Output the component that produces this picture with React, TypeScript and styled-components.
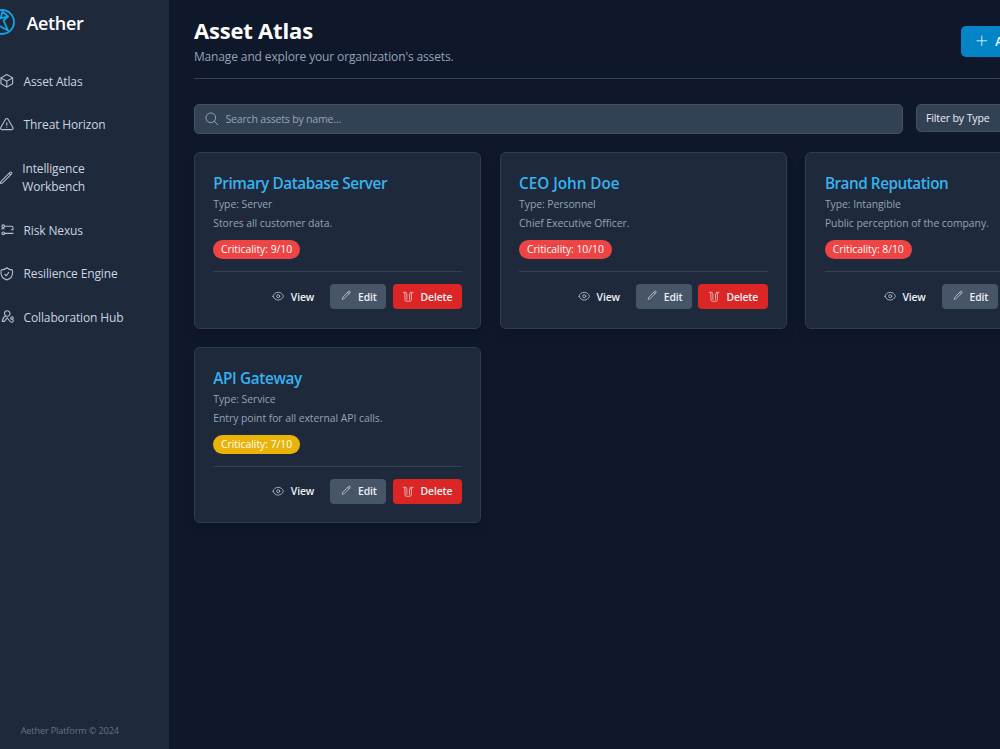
import React from "react";
import styled, { createGlobalStyle, css } from "styled-components";

const Global = createGlobalStyle`
  *, *::before, *::after { box-sizing: border-box; }
  html, body { margin: 0; height: 100%; overflow: hidden; background: #0f172a; }
  body { font-family: "Segoe UI", "Open Sans", "Noto Sans", sans-serif; color: #e2e8f0; }
  h1, h2, p { margin: 0; }
  button { font-family: inherit; border: 0; margin: 0; }
`;

const Shell = styled.div`
  display: flex;
  width: 1149px;
  height: 749px;
  margin-left: -31px;
`;

const Sidebar = styled.aside`
  display: flex;
  flex-direction: column;
  flex: none;
  width: 200px;
  padding: 8.7px 18.7px 12px;
  background: #1e293b;
`;

const Brand = styled.div`
  display: flex;
  align-items: center;
  gap: 11.7px;
  height: 28px;
  color: #fff;
  font-size: 18px;
  font-weight: 600;
  letter-spacing: -0.3px;
  svg { flex: none; color: #0ea5e9; }
`;

const Nav = styled.nav`
  display: flex;
  flex-direction: column;
  gap: 6.2px;
  margin-top: 25.8px;
`;

const NavItem = styled.a`
  display: flex;
  align-items: center;
  gap: 9.3px;
  padding: 9.3px 11px;
  color: #cbd5e1;
  font-size: 12px;
  letter-spacing: -0.14px;
  line-height: 18.65px;
  svg { flex: 0 1 15.6px; min-width: 0; color: #b4c0d0; }
`;

const NavLabel = styled.span`
  padding-top: 1px;
  margin-bottom: -1px;
`;

const SideFooter = styled.p`
  margin-top: auto;
  padding-left: 33px;
  color: #64748b;
  font-size: 9.2px;
  letter-spacing: -0.16px;
  line-height: 13px;
`;

const Main = styled.main`
  flex: 1;
  min-width: 0;
  padding: 16px 24.9px;
`;

const Header = styled.header`
  display: flex;
  justify-content: space-between;
  align-items: flex-start;
  height: 63px;
  border-bottom: 1px solid #334155;
`;

const Title = styled.h1`
  color: #fff;
  font-size: 22px;
  font-weight: 700;
  letter-spacing: -0.18px;
  line-height: 28px;
`;

const Subtitle = styled.p`
  margin-top: 2.5px;
  color: #94a3b8;
  font-size: 12px;
  letter-spacing: -0.13px;
  line-height: 19px;
`;

const AddButton = styled.button`
  display: flex;
  align-items: center;
  gap: 6.2px;
  width: 132px;
  height: 31px;
  margin-top: 9.6px;
  padding: 0 12.4px;
  border-radius: 5px;
  background: #0284c7;
  color: #fff;
  font-size: 12px;
  font-weight: 600;
  white-space: nowrap;
  svg { opacity: 0.85; }
`;

const Toolbar = styled.div`
  display: flex;
  align-items: flex-start;
  gap: 12.5px;
  margin: 24.5px 0 18.5px;
`;

const field = css`
  display: flex;
  align-items: center;
  border: 1px solid #435167;
  border-radius: 5px;
  background: #334155;
`;

const Search = styled.label`
  ${field}
  flex: none;
  width: 709.5px;
  height: 30.3px;
  gap: 6px;
  padding: 0 9px;
  color: #94a3b8;
  font-size: 10.6px;
  letter-spacing: -0.22px;
`;

const Filter = styled.div`
  ${field}
  flex: 1;
  height: 28.5px;
  padding: 0 9px;
  color: #e8edf4;
  font-size: 10.6px;
  letter-spacing: -0.14px;
`;

const Grid = styled.section`
  display: grid;
  grid-template-columns: repeat(3, 287.3px);
  gap: 18.5px;
`;

const Card = styled.article`
  height: 176.3px;
  padding: 18.8px 18.4px 17px;
  border: 1px solid #2f3d50;
  border-radius: 6px;
  background: #1e293b;
  box-shadow: 0 8px 12px -2px rgba(0, 0, 0, 0.12);
`;

const CardTitle = styled.h2<{ $tracking: number }>`
  color: #38b2f0;
  font-size: 15.3px;
  font-weight: 600;
  letter-spacing: ${(p) => p.$tracking}px;
  line-height: 22px;
`;

const Detail = styled.p`
  margin-top: 3.1px;
  color: #94a3b8;
  font-size: 10.4px;
  letter-spacing: -0.05px;
  line-height: 15.6px;
  &:first-of-type { margin-top: 3.1px; }
`;

const Badge = styled.span<{ $tone: string }>`
  display: block;
  width: fit-content;
  margin-top: 8.3px;
  padding: 0 7.8px;
  border-radius: 10px;
  background: ${(p) => p.$tone};
  color: #fff;
  font-size: 10.4px;
  letter-spacing: -0.04px;
  line-height: 19px;
`;

const Actions = styled.div`
  display: flex;
  justify-content: flex-end;
  gap: 6.5px;
  margin-top: 12.2px;
  padding-top: 12.2px;
  border-top: 1px solid #334155;
`;

const Action = styled.button<{ $bg?: string }>`
  display: flex;
  align-items: center;
  gap: 6.2px;
  height: 24.9px;
  padding: 0 9.4px;
  border-radius: 4px;
  background: ${(p) => p.$bg ?? "transparent"};
  color: #edf1f6;
  font-size: 10.4px;
  font-weight: 600;
  letter-spacing: -0.13px;
  svg { flex: none; opacity: 0.82; }
`;

const paths = {
  cube: "M21 7.5l-9-5.25L3 7.5m18 0l-9 5.25m9-5.25v9l-9 5.25M3 7.5l9 5.25M3 7.5v9l9 5.25m0-9v9",
  warning:
    "M12 9v3.75m-9.303 3.376c-.866 1.5.217 3.374 1.948 3.374h14.71c1.73 0 2.813-1.874 1.948-3.374L13.949 3.378c-.866-1.5-3.032-1.5-3.898 0L2.697 16.126zM12 15.75h.007v.008H12v-.008z",
  pencil:
    "M16.862 4.487l1.687-1.688a1.875 1.875 0 112.652 2.652L6.832 19.82a4.5 4.5 0 01-1.897 1.13l-2.685.8.8-2.685a4.5 4.5 0 011.13-1.897L16.863 4.487zm0 0L19.5 7.125",
  shortPencil:
    "M16.862 4.487l1.687-1.688a1.875 1.875 0 112.652 2.652L10.582 16.07a4.5 4.5 0 01-1.897 1.13L6 18l.8-2.685a4.5 4.5 0 011.13-1.897l8.932-8.931zm0 0L19.5 7.125",
  nexus:
    "M9 6.500h10.500a2 2 0 012 2V12M4.500 6.500a2 2 0 104 0 2 2 0 10-4 0M4 10.500h4M4.500 17.500a2 2 0 104 0 2 2 0 10-4 0M9 17.500h12.500M19 12h2.500",
  shield:
    "M9 12.75L11.25 15 15 9.75m-3-7.036A11.959 11.959 0 013.598 6 11.99 11.99 0 003 9.749c0 5.592 3.824 10.29 9 11.623 5.176-1.332 9-6.03 9-11.622 0-1.31-.21-2.571-.598-3.751h-.152c-3.196 0-6.1-1.248-8.25-3.285z",
  people:
    "M8.500 7a4.200 4.200 0 108.400 0 4.200 4.200 0 10-8.400 0M10.500 10.500C7.500 12 5.500 15.500 5 19h3.500L12.500 13.500l4 5M18 14a2 2 0 104 0 2 2 0 10-4 0M18 19a2 2 0 003.800 0v-2",
  plus: "M12 4.5v15m7.5-7.5h-15",
  search: "M21 21l-5.197-5.197m0 0A7.5 7.5 0 105.196 5.196a7.5 7.5 0 0010.607 10.607z",
  eye: "M2.036 12.322a1.012 1.012 0 010-.639C3.423 7.51 7.36 4.5 12 4.5c4.638 0 8.573 3.007 9.963 7.178.07.207.07.431 0 .639C20.577 16.49 16.64 19.5 12 19.5c-4.638 0-8.573-3.007-9.963-7.178zM15 12a3 3 0 11-6 0 3 3 0 016 0z",
  trash:
    "M14.600 8v10M9.400 8v10M5.200 5.500L6 19.700a2.250 2.250 0 002.250 2.050h7.500A2.250 2.250 0 0018 19.700L18.800 5.500M2.500 4.500h5.500v3M21.500 4.500h-5.500v3",
};

type IconName = keyof typeof paths;

const Icon = ({ name, size, weight = 1.5 }: { name: IconName; size: number; weight?: number }) => (
  <svg
    width={size}
    height={size}
    viewBox="0 0 24 24"
    fill="none"
    stroke="currentColor"
    strokeWidth={weight}
    strokeLinecap="round"
    strokeLinejoin="round"
  >
    <path d={paths[name]} />
  </svg>
);

const Logo = () => (
  <svg width="27" height="27" viewBox="0 0 27 27" fill="none" stroke="currentColor" strokeWidth="1.8">
    <circle cx="14" cy="13" r="12" />
    <path d="M14.5 2.5L20 7.500L15.500 11.500L20 21.500L7 14.500M14.500 2.500L12.500 9.500L19 7.500" strokeLinejoin="round" />
  </svg>
);

const navItems: { icon: IconName; label: string }[] = [
  { icon: "cube", label: "Asset Atlas" },
  { icon: "warning", label: "Threat Horizon" },
  { icon: "pencil", label: "Intelligence Workbench" },
  { icon: "nexus", label: "Risk Nexus" },
  { icon: "shield", label: "Resilience Engine" },
  { icon: "people", label: "Collaboration Hub" },
];

const assets = [
  { name: "Primary Database Server", type: "Server", text: "Stores all customer data.", score: 9, tracking: -0.42 },
  { name: "CEO John Doe", type: "Personnel", text: "Chief Executive Officer.", score: 10, tracking: -0.04 },
  { name: "Brand Reputation", type: "Intangible", text: "Public perception of the company.", score: 8, tracking: -0.47 },
  { name: "API Gateway", type: "Service", text: "Entry point for all external API calls.", score: 7, tracking: -0.35 },
];

export default function App() {
  return (
    <>
      <Global />
      <Shell>
        <Sidebar>
          <Brand>
            <Logo />
            Aether
          </Brand>
          <Nav>
            {navItems.map((item) => (
              <NavItem key={item.label}>
                <Icon name={item.icon} size={15.6} weight={1.7} />
                <NavLabel>{item.label}</NavLabel>
              </NavItem>
            ))}
          </Nav>
          <SideFooter>Aether Platform © 2024</SideFooter>
        </Sidebar>
        <Main>
          <Header>
            <div>
              <Title>Asset Atlas</Title>
              <Subtitle>Manage and explore your organization's assets.</Subtitle>
            </div>
            <AddButton>
              <Icon name="plus" size={15.6} />
              Add Asset
            </AddButton>
          </Header>
          <Toolbar>
            <Search>
              <Icon name="search" size={15.6} />
              Search assets by name...
            </Search>
            <Filter>Filter by Type</Filter>
          </Toolbar>
          <Grid>
            {assets.map((a) => (
              <Card key={a.name}>
                <CardTitle $tracking={a.tracking}>{a.name}</CardTitle>
                <Detail>Type: {a.type}</Detail>
                <Detail>{a.text}</Detail>
                <Badge $tone={a.score > 7 ? "#ef4444" : "#eab308"}>Criticality: {a.score}/10</Badge>
                <Actions>
                  <Action>
                    <Icon name="eye" size={12.4} />
                    View
                  </Action>
                  <Action $bg="#475569">
                    <Icon name="shortPencil" size={12.4} />
                    Edit
                  </Action>
                  <Action $bg="#dc2626">
                    <Icon name="trash" size={12.4} />
                    Delete
                  </Action>
                </Actions>
              </Card>
            ))}
          </Grid>
        </Main>
      </Shell>
    </>
  );
}
